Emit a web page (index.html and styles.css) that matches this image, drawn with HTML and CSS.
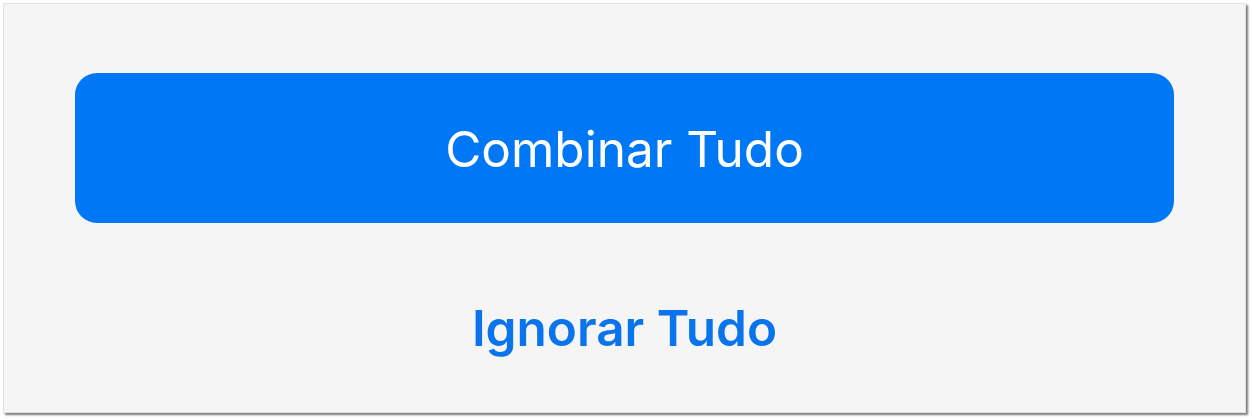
FILE: index.html
```html
<!DOCTYPE html>
<html lang="pt">
<head>
<meta charset="UTF-8">
<title>Combinar Tudo</title>
<link rel="stylesheet" href="styles.css">
</head>
<body>
  <div class="painel">
    <button class="btn-combinar">Combinar Tudo</button>
    <button class="btn-ignorar">Ignorar Tudo</button>
  </div>
</body>
</html>
```

FILE: styles.css
```css
html, body {
  margin: 0;
  padding: 0;
  background: #ffffff;
  font-family: 'Inter', 'Liberation Sans', sans-serif;
}
body {
  padding: 3px 6px 6px 3px;
  height: 419px;
  box-sizing: border-box;
}
.painel {
  height: 100%;
  box-sizing: border-box;
  background: #f5f5f5;
  border: 1px solid #e2e2e2;
  box-shadow: 2px 2px 2px #7a7a7a;
  display: flex;
  flex-direction: column;
  align-items: center;
  padding: 69px 71px 0 71px;
}
.btn-combinar {
  width: 100%;
  height: 150px;
  border: none;
  border-radius: 22px;
  background: #0077f5;
  color: #ffffff;
  font-family: inherit;
  font-size: 49.5px;
  font-weight: 400;
  padding-top: 2px;
}
.btn-ignorar {
  margin-top: 75px;
  border: none;
  background: none;
  padding: 0;
  color: #0a74ec;
  font-family: inherit;
  font-size: 49.5px;
  font-weight: 600;
}
```
